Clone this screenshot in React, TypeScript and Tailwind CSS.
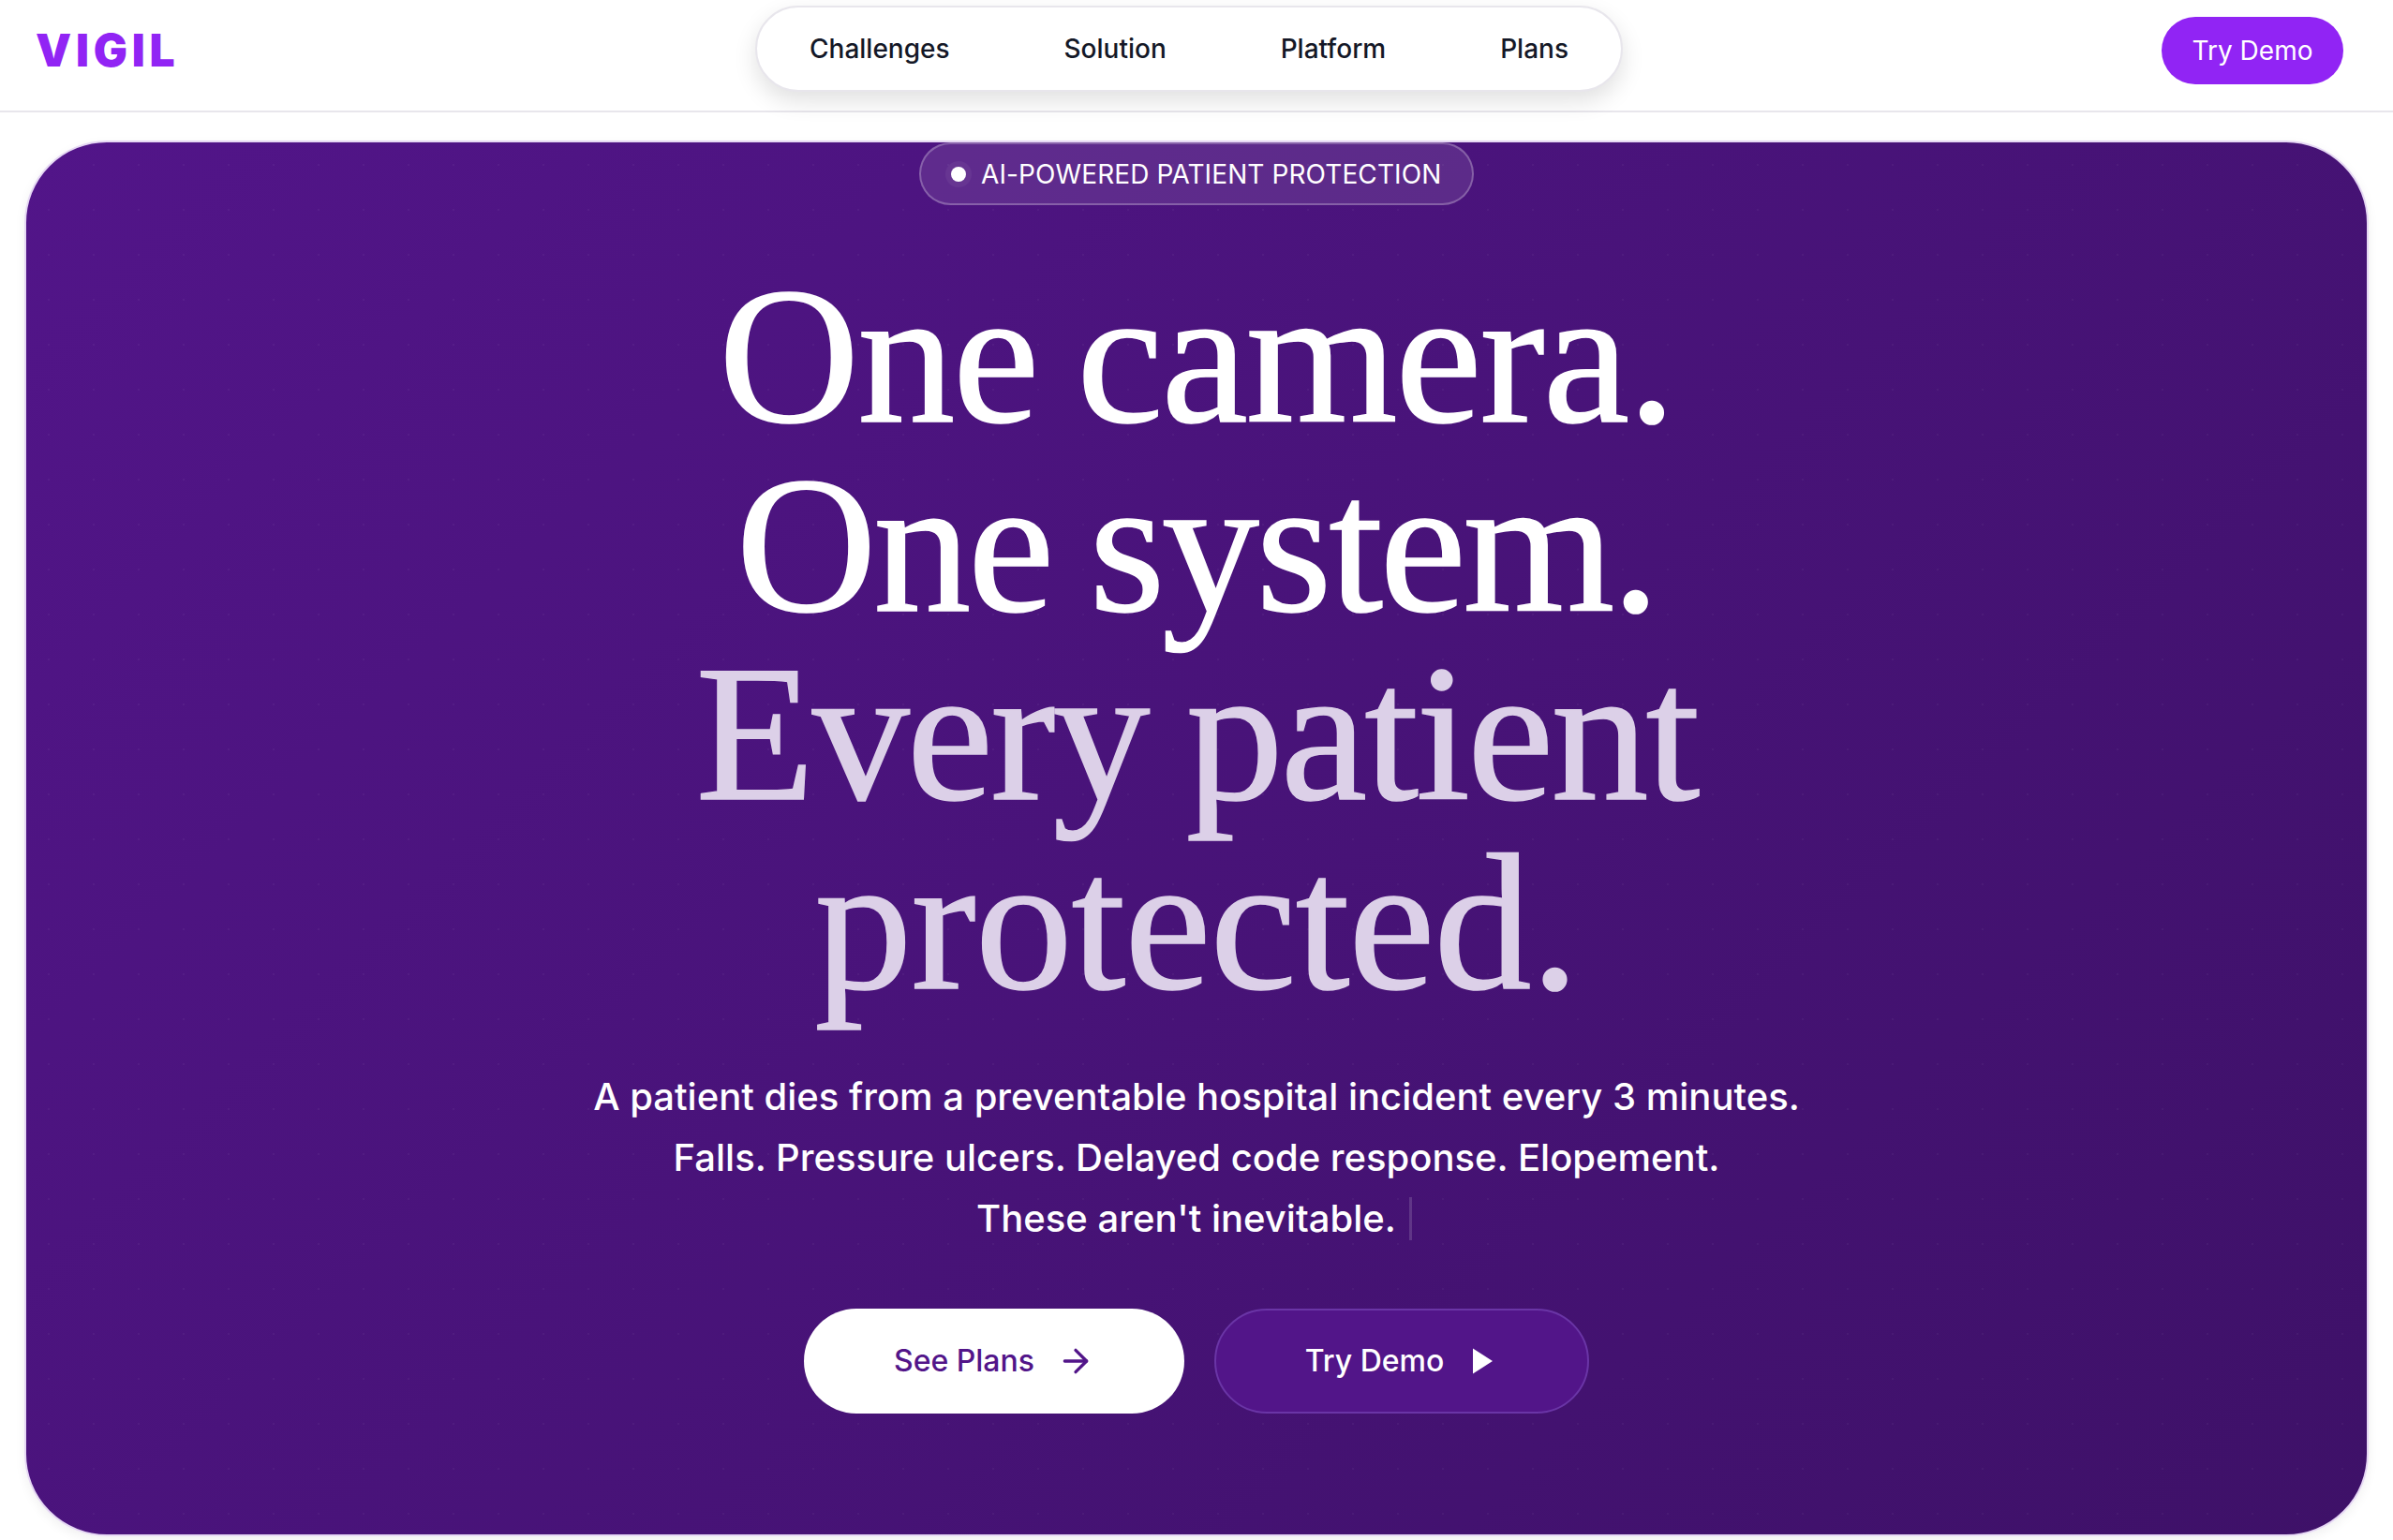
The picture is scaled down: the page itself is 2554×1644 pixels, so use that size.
const SANS = "font-['Inter','Noto_Sans',sans-serif]";

function ArrowIcon() {
  return (
    <svg width="40" height="40" viewBox="0 0 24 24" fill="none" stroke="currentColor" strokeWidth="2" strokeLinecap="round" strokeLinejoin="round">
      <path d="M5 12h14" />
      <path d="m12 5 7 7-7 7" />
    </svg>
  );
}

function PlayIcon() {
  return (
    <svg width="36" height="36" viewBox="0 0 24 24" fill="currentColor">
      <polygon points="6 3 20 12 6 21" />
    </svg>
  );
}

export default function App() {
  return (
    <div className={`${SANS} h-[1644px] w-full overflow-hidden bg-white`}>
      <header className="relative flex h-[120px] items-center justify-between border-b-2 border-[#e8e6ec] pb-[10px] pl-[38px] pr-[53px]">
        <div className="text-[48px] font-black leading-none tracking-[4.8px] text-[#9124f4]">VIGIL</div>
        <nav className="absolute left-[806px] top-[6px] flex h-[92px] w-[926px] items-center justify-between rounded-[46px] border-2 border-[#e8e6ec] bg-white px-[56px] shadow-[0_10px_24px_rgba(0,0,0,0.12)]">
          {["Challenges", "Solution", "Platform", "Plans"].map((n) => (
            <span key={n} className="text-[28px] font-medium text-[#141827]">{n}</span>
          ))}
        </nav>
        <button className="flex h-[72px] w-[194px] items-center justify-center rounded-full bg-[#9124f4] text-[28px] text-white">Try Demo</button>
      </header>
      <main className="px-[26px] pt-[30px]">
        <section className="relative flex h-[1490px] flex-col items-center overflow-hidden rounded-[88px] border-2 border-[#e6d8f4] bg-[linear-gradient(135deg,#521589_0%,#3e1168_100%)] shadow-[0_4px_12px_rgba(0,0,0,0.06)]">
          <div className="absolute inset-0 bg-[radial-gradient(rgba(255,255,255,0.04)_1.5px,transparent_1.5px)] bg-[length:48px_48px]" />
          <div className="relative flex h-[67px] w-[592px] items-center rounded-full border-2 border-white/25 bg-white/10 pl-[32px] text-[28px] tracking-[0.1px] text-white">
            <span className="mr-[16px] h-[16px] w-[16px] rounded-full bg-white shadow-[0_0_0_6px_rgba(255,255,255,0.05)]" />
            AI-POWERED PATIENT PROTECTION
          </div>
          <h1 className="relative mt-[61px] text-center font-['Liberation_Serif',serif] text-[208px] font-normal leading-[201.6px] text-white [word-spacing:-8px] [-webkit-text-stroke:1.5px_currentColor]">
            <div className="tracking-[-2.1px]">One camera.</div>
            <div className="tracking-[-3.4px]">One system.</div>
            <div className="tracking-[-2.9px] text-[#dcd0e8]">Every patient</div>
            <div className="tracking-[-1.1px] text-[#dcd0e8]">protected.</div>
          </h1>
          <div className="relative mt-[52px] text-center text-[40px] font-medium leading-[65px] text-white">
            <div>A patient dies from a preventable hospital incident every 3 minutes.</div>
            <div>Falls. Pressure ulcers. Delayed code response. Elopement.</div>
            <div className="flex items-center justify-center pr-[5px]">
              These aren't inevitable.
              <span className="ml-[14px] h-[46px] w-[3px] bg-white/15" />
            </div>
          </div>
          <div className="relative mt-[64px] flex gap-[32px]">
            <button className="flex h-[112px] w-[406px] items-center justify-center gap-[24px] rounded-full bg-white text-[32px] font-medium text-[#521589]">
              See Plans <ArrowIcon />
            </button>
            <button className="flex h-[112px] w-[400px] items-center justify-center gap-[22px] rounded-full border-2 border-[#6a35a6] bg-[#521589] text-[32px] font-medium text-white">
              Try Demo <PlayIcon />
            </button>
          </div>
        </section>
      </main>
    </div>
  );
}
